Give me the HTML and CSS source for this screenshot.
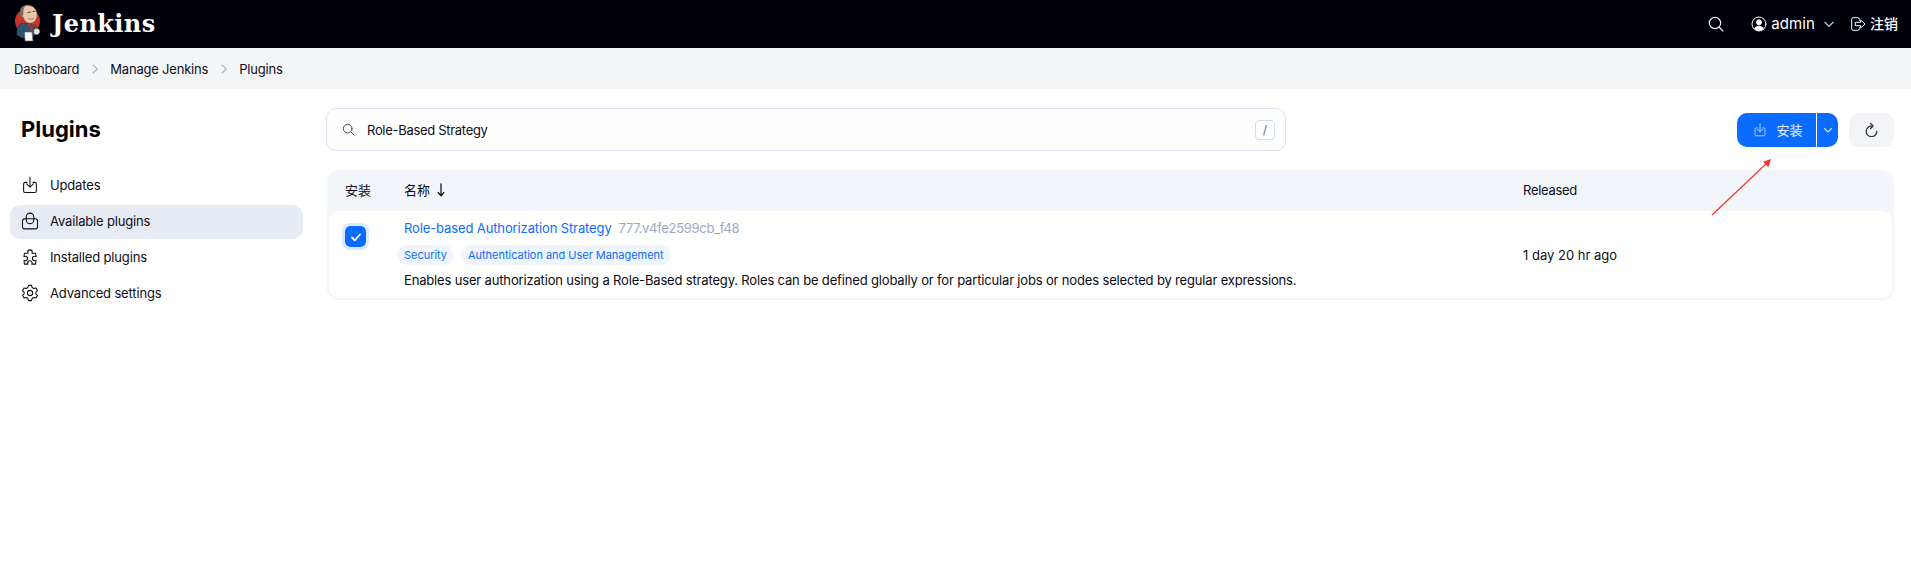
FILE: index.html
```html
<!DOCTYPE html>
<html lang="zh">
<head>
<meta charset="utf-8">
<title>Plugins - Jenkins</title>
<link rel="stylesheet" href="styles.css">
</head>
<body>
<header class="top">
  <a class="brand">
    <svg class="logo" viewBox="0 0 28 40" width="28" height="40">
      <circle cx="13.500" cy="17" r="12.500" fill="#c9342c"/>
      <path d="M3 31c-.5-5 .5-10 5-12l4 .5 6 .5 4 2c2.500 2 3.500 5 3 8l-5 1-2 3H8z" fill="#2b566e" stroke="#1d2a33" stroke-width=".5"/>
      <path d="M6.500 5.500C8 2 12 .5 16 1.500c4 1 6.500 4 7 8 .3 3-.5 6-2.500 8-2 1.800-5 2.300-7.500 1-2-1-3-3-3.500-5-1.500-.5-2.500-2-2.300-3.500.2-1.500.5-3 .3-4.500z" fill="#ecc6a8" stroke="#6b5142" stroke-width=".5"/>
      <path d="M6.500 5.500C7.500 3 9.500 1.800 11.500 1.500 9.500 4 9 7 9.500 10.500L8.300 12.500C6.500 12 5.800 10.500 6 9z" fill="#77706a"/>
      <path d="M14 8.500l2.500-.5M19 7.500l2-.3" stroke="#3a2c25" stroke-width=".9" stroke-linecap="round"/>
      <path d="M14.500 14.500c2 1 4 .8 6-.5" stroke="#8a5a44" stroke-width=".7" fill="none"/>
      <path d="M17.500 21l-3.500-1.800v3.800zM17.500 21l3.500-1.800v3.800z" fill="#d22a25"/>
      <path d="M16 23.500h3l.3 3h-3z" fill="#9d3a3a"/>
      <path d="M10.500 28h7.500l1 9h-8z" fill="#f7f7f7" stroke="#5a5a5a" stroke-width=".6"/>
      <path d="M20 25.500c2-1.500 4.500-1 5.500.5.800 1.500 0 4-2 4.500-2 .4-3.500-.5-3.800-2z" fill="#e8e6e0" stroke="#5a5a5a" stroke-width=".5"/>
    </svg>
    <span class="wordmark">Jenkins</span>
  </a>
  <div class="top-actions">
    <svg class="ico top-search" viewBox="0 0 24 24"><circle cx="10.500" cy="10.500" r="8.500"/><path d="M16.500 16.500l6 6"/></svg>
    <div class="user">
      <svg class="ico user-ico" viewBox="0 0 24 24"><circle cx="12" cy="12" r="10.500"/><circle cx="12" cy="9.500" r="3.800" fill="currentColor"/><path d="M5 19c1.500-3.500 4-4.500 7-4.500s5.500 1 7 4.500c-2 2-4.500 3-7 3s-5-1-7-3z" fill="currentColor" stroke="none"/></svg>
      <span>admin</span>
      <svg class="ico chev" viewBox="0 0 24 24"><path d="M5 9l7 7 7-7"/></svg>
    </div>
    <div class="logout">
      <svg class="ico out-ico" viewBox="0 0 24 24"><path d="M14 6.500V5a2.500 2.500 0 0 0-2.500-2.500H5A2.500 2.500 0 0 0 2.500 5v14A2.500 2.500 0 0 0 5 21.500h6.500A2.500 2.500 0 0 0 14 19v-1.500M8.500 9.500H16V6l6.500 6-6.500 6v-3.500H8.500z"/></svg>
      <span>注销</span>
    </div>
  </div>
</header>

<nav class="crumbs">
  <span>Dashboard</span>
  <svg class="sep" viewBox="0 0 6 10"><path d="M.8.8L5.200 5 .8 9.200"/></svg>
  <span>Manage Jenkins</span>
  <svg class="sep" viewBox="0 0 6 10"><path d="M.8.8L5.200 5 .8 9.200"/></svg>
  <span>Plugins</span>
</nav>

<div class="layout">
  <aside class="side">
    <h1 class="side-title">Plugins</h1>
    <ul class="menu">
      <li class="menu-item">
        <svg class="ico menu-ico" viewBox="0 0 24 24"><path d="M8 8.500H5.500a2 2 0 0 0-2 2V20a2 2 0 0 0 2 2h13a2 2 0 0 0 2-2v-9.500a2 2 0 0 0-2-2H16M12 1.500V15M7.500 10.500L12 15l4.500-4.500"/></svg>
        <span>Updates</span>
      </li>
      <li class="menu-item active">
        <svg class="ico menu-ico" viewBox="0 0 24 24"><path d="M7 9V6.500a5 5 0 0 1 10 0V9"/><rect x="2" y="9" width="20" height="13.500" rx="3"/><path d="M7 9v1.500a5 5 0 0 0 10 0V9"/></svg>
        <span>Available plugins</span>
      </li>
      <li class="menu-item">
        <svg class="ico menu-ico" viewBox="0 0 24 24"><path d="M9 5.500a3 3 0 1 1 6 0c0 .8-.4 1.200-.4 1.500h4.900l.5 4.500c-.4 0-1-.5-1.800-.5a3 3 0 0 0 0 6c.8 0 1.400-.3 1.800-.5l-.5 5h-5.100c.2-.5.400-1 .4-1.500a3 3 0 0 0-6 0c0 .5.200 1 .4 1.500H4.500L4 16.500c.5.300 1 .5 1.700.5a3 3 0 0 0 0-6c-.7 0-1.200.2-1.700.5L4.500 7h4.900c0-.3-.4-.7-.4-1.500z"/></svg>
        <span>Installed plugins</span>
      </li>
      <li class="menu-item">
        <svg class="ico menu-ico" viewBox="0 0 24 24"><circle cx="12" cy="12" r="3.500"/><path d="M10 1.800h4l.8 2.800 2.300 1.300 2.800-.7 2 3.500-2 2.100v2.400l2 2.100-2 3.500-2.800-.7-2.300 1.300-.8 2.800h-4l-.8-2.800-2.300-1.300-2.800.7-2-3.500 2-2.100v-2.400l-2-2.100 2-3.500 2.800.7 2.300-1.300z"/></svg>
        <span>Advanced settings</span>
      </li>
    </ul>
  </aside>

  <main class="content">
    <div class="toolbar">
      <div class="search">
        <svg class="ico search-ico" viewBox="0 0 24 24"><circle cx="10.500" cy="10.500" r="8"/><path d="M16.500 16.500l6 6"/></svg>
        <span class="search-text">Role-Based Strategy</span>
        <kbd class="kbd">/</kbd>
      </div>
      <div class="btn-group">
        <button class="btn-install">
          <svg class="ico install-ico" viewBox="0 0 24 24"><path d="M8 8.500H5.500a2 2 0 0 0-2 2V20a2 2 0 0 0 2 2h13a2 2 0 0 0 2-2v-9.500a2 2 0 0 0-2-2H16M12 1.500V15M7.500 10.500L12 15l4.500-4.500"/></svg>
          <span>安装</span>
        </button>
        <button class="btn-drop">
          <svg class="ico drop-ico" viewBox="0 0 24 24"><path d="M5 9l7 7 7-7"/></svg>
        </button>
      </div>
      <button class="btn-refresh">
        <svg class="ico refresh-ico" viewBox="0 0 24 24"><path d="M13 6.500a8.500 8.500 0 1 0 7.500 8.500"/><path d="M10.500 2.500L14.500 6.500l-4 4"/></svg>
      </button>
    </div>

    <section class="table">
      <div class="thead">
        <div class="col-check">安装</div>
        <div class="col-name name-head">名称
          <svg class="sort" viewBox="0 0 8 14"><path d="M4 .8v12M1.200 9.500L4 12.800l2.800-3.300"/></svg>
        </div>
        <div class="col-date">Released</div>
      </div>
      <div class="row">
        <div class="col-check">
          <span class="checkbox">
            <svg viewBox="0 0 12 12" width="12" height="12"><path d="M2 6.500l2.800 2.800L10 3.500"/></svg>
          </span>
        </div>
        <div class="col-name">
          <div class="plugin-line">
            <a class="plugin-link">Role-based Authorization Strategy</a>
            <span class="plugin-ver">777.v4fe2599cb_f48</span>
          </div>
          <div class="tags">
            <span class="tag">Security</span>
            <span class="tag">Authentication and User Management</span>
          </div>
          <p class="plugin-desc">Enables user authorization using a Role-Based strategy. Roles can be defined globally or for particular jobs or nodes selected by regular expressions.</p>
        </div>
        <div class="col-date">1 day 20 hr ago</div>
      </div>
    </section>
  </main>
</div>

<svg class="annot" viewBox="0 0 70 66" width="70" height="66">
  <path d="M2 58L56 7" stroke="#f3352c" stroke-width="1.200" fill="none"/>
  <path d="M61 2L58.500 10 53 4.800z" fill="#f3352c"/>
</svg>
</body>
</html>
```

FILE: styles.css
```css
* { box-sizing: border-box; }
html, body { margin: 0; padding: 0; }
body {
  position: relative;
  min-height: 563px;
  background: #fff;
  color: #0e0e18;
  font-family: Inter, "Noto Sans CJK SC", sans-serif;
  font-size: 13px;
  letter-spacing: -.16px;
  line-height: 20px;
  overflow: hidden;
}
.ico {
  display: block;
  fill: none;
  stroke: currentColor;
  stroke-width: 1.800;
  stroke-linecap: round;
  stroke-linejoin: round;
  flex: none;
}

/* header */
.top {
  height: 48px;
  background: #00000a;
  color: #fff;
  display: flex;
  align-items: center;
  justify-content: space-between;
  padding: 0 13px 0 14px;
}
.brand { display: flex; align-items: center; gap: 10px; }
.logo { display: block; }
.wordmark {
  font-family: "DejaVu Serif", serif;
  font-weight: 700;
  font-size: 24px;
  line-height: 28px;
  letter-spacing: .4px;
}
.top-actions { display: flex; align-items: center; }
.top-search { width: 16px; height: 16px; margin-right: 27px; color: #f0f0f0; stroke-width: 1.700; }
.user { display: flex; align-items: center; font-size: 15px; font-weight: 400; letter-spacing: .1px; }
.user-ico { width: 16px; height: 16px; margin-right: 4px; stroke-width: 1.500; }
.chev { width: 14px; height: 14px; margin-left: 7px; stroke-width: 2; color: #cfd3da; }
.logout { display: flex; align-items: center; margin-left: 14px; font-size: 14px; font-weight: 500; letter-spacing: 0; }
.out-ico { width: 16px; height: 16px; margin-right: 4px; stroke-width: 1.500; }

/* breadcrumb */
.crumbs {
  height: 41px;
  background: #f4f5f7;
  display: flex;
  align-items: center;
  padding-left: 14px;
  letter-spacing: -.2px;
}
.sep { width: 6px; height: 10px; margin: 0 12.500px; fill: none; stroke: #a9bcd8; stroke-width: 1.300; flex: none; }

/* layout */
.layout { display: flex; }
.side { width: 326px; padding: 0 23px 0 10px; flex: none; }
.side-title {
  margin: 24px 0 0 11px;
  font-size: 22px;
  line-height: 32px;
  font-weight: 700;
  letter-spacing: 0;
  color: #000;
}
.menu { list-style: none; margin: 24px 0 0; padding: 0; display: flex; flex-direction: column; gap: 2px; }
.menu-item {
  height: 34px;
  display: flex;
  align-items: center;
  padding: 0 0 2px 11px;
  border-radius: 10px;
}
.menu-item.active { background: #e7ebf3; }
.menu-ico { width: 18px; height: 18px; margin-right: 11px; stroke-width: 1.400; }

/* content */
.content { flex: 1; padding: 19px 17px 0 0; min-width: 0; }
.toolbar { display: flex; align-items: center; }
.search {
  width: 960px;
  height: 43px;
  border: 1px solid #dbe1ee;
  border-radius: 10px;
  display: flex;
  align-items: center;
  padding: 0 10px 0 15px;
  background: #fefefe;
}
.search-ico { width: 13px; height: 13px; color: #44464f; margin-right: 12px; }
.search-text { flex: 1; letter-spacing: -.3px; }
.kbd {
  width: 20px;
  height: 20px;
  border: 1px solid #d5dcea;
  border-radius: 4px;
  display: flex;
  align-items: center;
  justify-content: center;
  color: #6b7ea0;
  font: 500 12px/1 Inter, sans-serif;
}
.btn-group { display: flex; margin-left: auto; height: 34px; gap: 1px; }
button { border: 0; padding: 0; font-family: inherit; }
.btn-install {
  width: 79px;
  padding-left: 3px;
  background: #0a6cff;
  color: #e6efff;
  border-radius: 10px 0 0 10px;
  display: flex;
  align-items: center;
  justify-content: center;
  gap: 9px;
  font-size: 13px;
  font-weight: 400;
}
.install-ico { width: 14px; height: 14px; stroke-width: 1.600; color: #b9d4ff; }
.btn-drop {
  width: 21px;
  background: #0a6cff;
  color: #cfe2ff;
  border-radius: 0 10px 10px 0;
  display: flex;
  align-items: center;
  justify-content: center;
}
.drop-ico { width: 12px; height: 12px; stroke-width: 2.200; }
.btn-refresh {
  width: 45px;
  height: 34px;
  margin-left: 11px;
  background: #f2f4f8;
  color: #333;
  border-radius: 10px;
  display: flex;
  align-items: center;
  justify-content: center;
}
.refresh-ico { width: 15px; height: 15px; stroke-width: 2; }

/* table */
.table {
  margin: 19px 0 0 1px;
  background: #f2f5f9;
  border-radius: 12px;
  padding: 0 2px 2px;
}
.thead, .row { display: grid; grid-template-columns: 75px 1fr 369px; }
.thead { height: 41px; padding-bottom: 2px; align-items: center; font-size: 13px; }
.thead .col-check { padding-left: 16px; letter-spacing: 0; }
.name-head { display: flex; align-items: center; gap: 7px; letter-spacing: 0; }
.sort { width: 8px; height: 14px; fill: none; stroke: #14141f; stroke-width: 1.300; stroke-linecap: round; stroke-linejoin: round; }
.thead .col-date { letter-spacing: -.3px; }
.row {
  height: 87px;
  background: #fff;
  border-radius: 10px;
  align-items: center;
}
.row .col-check { align-self: start; padding: 12px 0 0 13px; }
.row .col-name { padding-bottom: 2px; }
.row .col-date { padding-top: 1px; letter-spacing: 0; }
.checkbox {
  display: flex;
  width: 27px;
  height: 27px;
  align-items: center;
  justify-content: center;
  border-radius: 8px;
  background: #0a6cff;
  border: 3px solid #dbe8ff;
  background-clip: padding-box;
}
.checkbox svg { fill: none; stroke: #fff; stroke-width: 1.800; stroke-linecap: round; stroke-linejoin: round; }
.plugin-line { display: flex; gap: 7px; height: 20px; align-items: center; }
.plugin-link { color: #0a6cff; letter-spacing: -.12px; }
.plugin-ver { color: #9aa9c2; letter-spacing: -.3px; }
.tags { display: flex; gap: 7px; margin: 7px 0 0 -7px; }
.tag {
  height: 20px;
  padding: 0 7px;
  border-radius: 10px;
  background: #f0f5fd;
  color: #0a6cff;
  font-size: 11px;
  letter-spacing: -.03px;
  line-height: 20px;
}
.plugin-desc { margin: 5px 0 0; line-height: 20px; color: #0a0a14; }

/* annotation arrow lying over the page */
.annot { position: absolute; left: 1710px; top: 157px; }
```
